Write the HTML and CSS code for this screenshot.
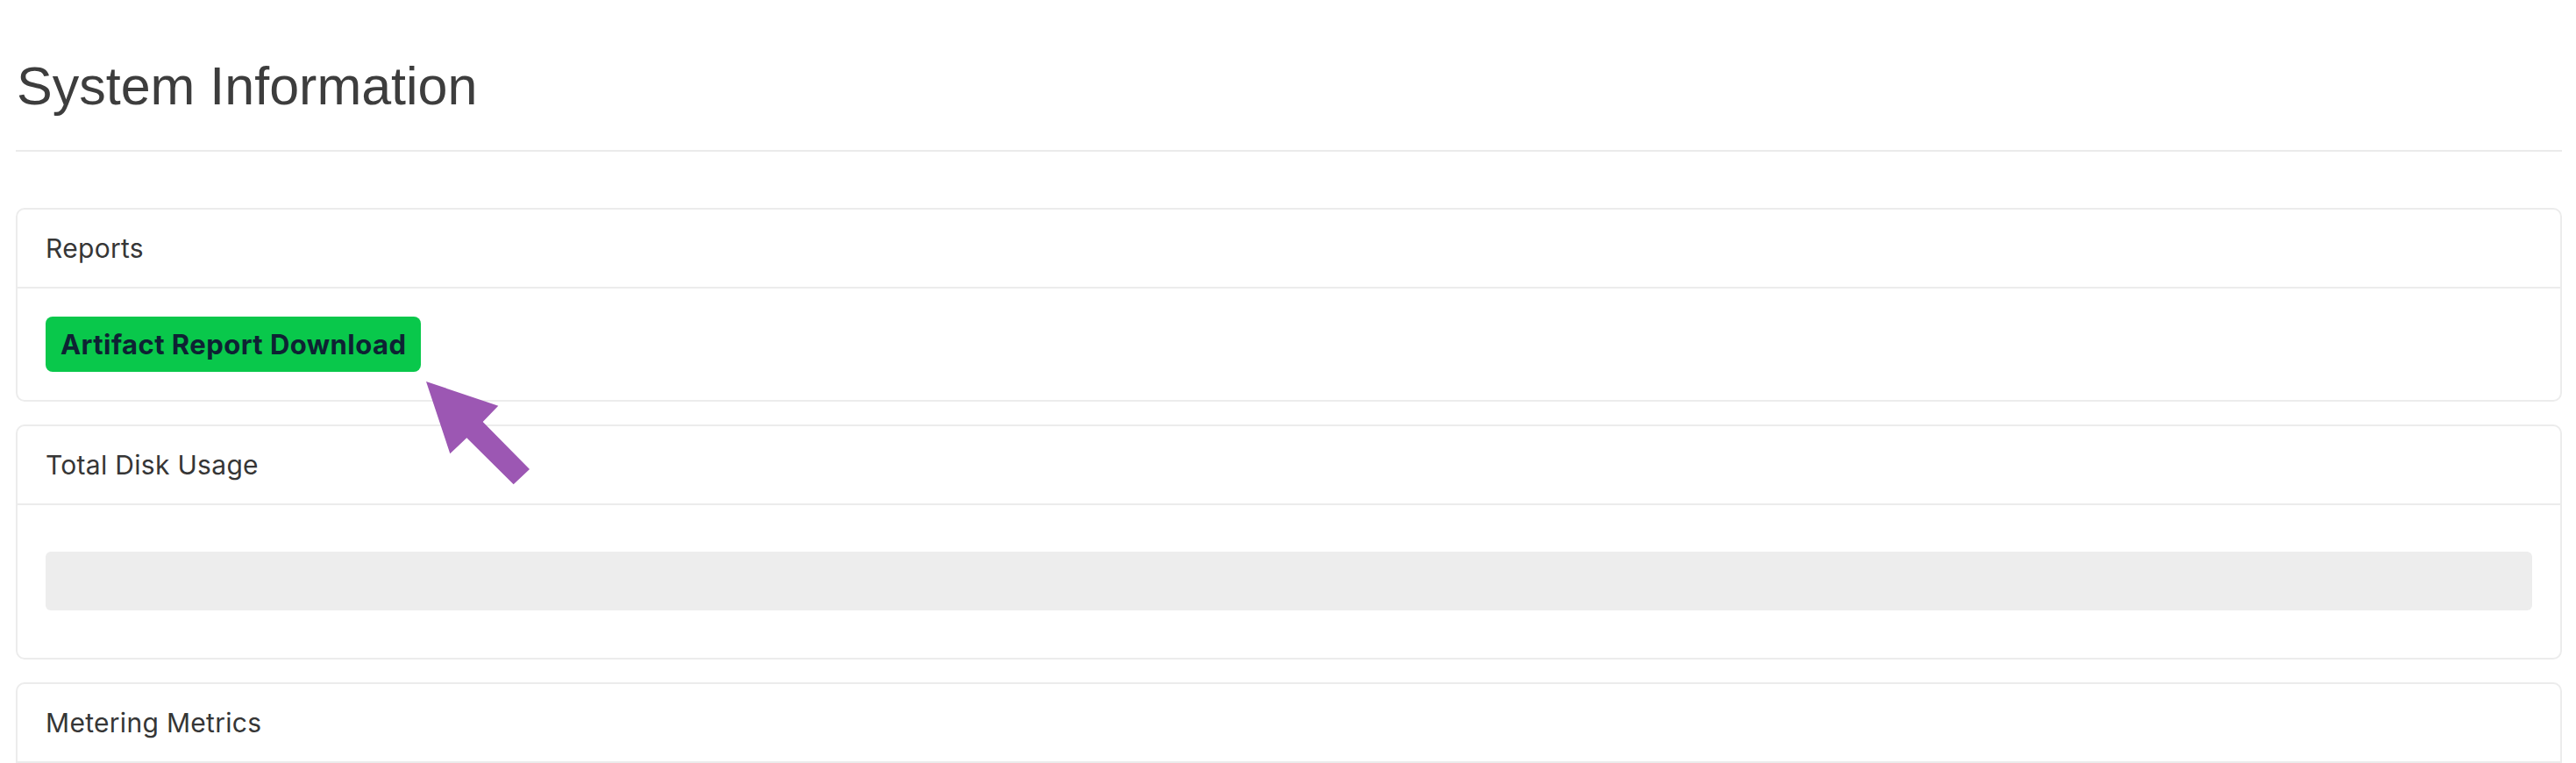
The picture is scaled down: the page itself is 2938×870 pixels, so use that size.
FILE: index.html
```html
<!DOCTYPE html>
<html lang="en">
<head>
<meta charset="utf-8">
<title>System Information</title>
<link rel="stylesheet" href="styles.css">
</head>
<body>
<main class="page">
  <h1 class="page-title">System Information</h1>
  <hr class="divider">

  <section class="card">
    <div class="card-header">Reports</div>
    <div class="card-body">
      <div class="button-wrap">
        <button class="btn-download" type="button">Artifact Report Download</button>
        <svg class="pointer-arrow" width="130" height="130" viewBox="0 0 130 130" aria-hidden="true">
          <polygon points="0,0 82.3,27.7 64.7,46 118,100 99.7,117.3 46.3,64.3 27.3,82.3" fill="#9c57b3"/>
        </svg>
      </div>
    </div>
  </section>

  <section class="card">
    <div class="card-header">Total Disk Usage</div>
    <div class="card-body">
      <div class="usage-bar"></div>
    </div>
  </section>

  <section class="card">
    <div class="card-header">Metering Metrics</div>
    <div class="card-body card-body-tall"></div>
  </section>
</main>
</body>
</html>
```
FILE: styles.css
```css
html, body {
  margin: 0;
  padding: 0;
  background: #ffffff;
  overflow: hidden;
}

.page {
  padding: 62px 16px 0 18px;
  font-family: Inter, "Noto Sans", sans-serif;
  color: #363636;
}

.page-title {
  margin: 0;
  font-family: "Liberation Sans", Arial, sans-serif;
  font-weight: 400;
  font-size: 61px;
  line-height: 72px;
  color: #3d3d3d;
  padding-left: 1px;
}

.divider {
  margin: 37px 0 64px 0;
  border: 0;
  height: 2px;
  background: #ebebeb;
}

.card {
  border: 2px solid #ececec;
  border-radius: 10px;
  margin-bottom: 26px;
}

.card-header {
  padding: 23px 32px;
  font-size: 30px;
  line-height: 42px;
  letter-spacing: 0.3px;
  border-bottom: 2px solid #ececec;
  color: #363636;
}

.card-body {
  padding: 32px 32px 32px 32px;
}

.card-body-tall {
  height: 200px;
}

.button-wrap {
  position: relative;
  display: flex;
}

.btn-download {
  height: 63px;
  padding: 0 17px;
  border: 0;
  border-radius: 8px;
  background: #09c84b;
  color: #0e2233;
  font-family: Inter, "Noto Sans", sans-serif;
  font-weight: 700;
  font-size: 31px;
  letter-spacing: 0.45px;
  line-height: 63px;
  cursor: pointer;
}

.pointer-arrow {
  position: absolute;
  left: 434px;
  top: 74px;
}

.usage-bar {
  margin: 21px 0 22px 0;
  height: 67px;
  border-radius: 6px;
  background: #ededed;
}
```
